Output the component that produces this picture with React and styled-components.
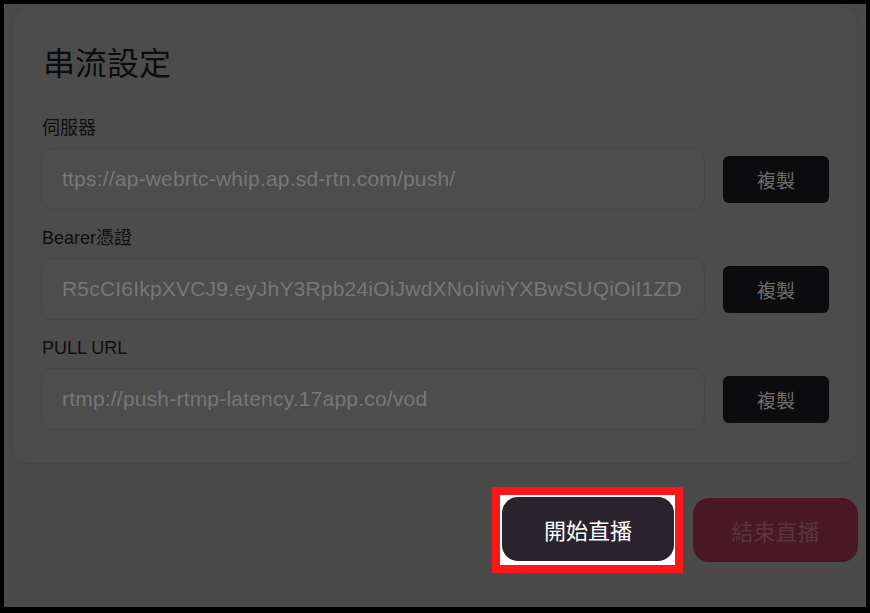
import React from "react";
import styled, { createGlobalStyle } from "styled-components";

const GlobalStyle = createGlobalStyle`
  html, body {
    margin: 0;
    padding: 0;
    background: #000;
  }
  body {
    font-family: "Liberation Sans", "Noto Sans CJK TC", sans-serif;
  }
`;

const Frame = styled.div`
  margin: 4px;
  width: 862px;
  height: 603px;
  background: #4a4a4a;
  overflow: hidden;
  display: flex;
  flex-direction: column;
  box-sizing: border-box;
  padding: 2px 8px 0 8px;
`;

const Card = styled.section`
  background: #4c4c4c;
  border: 1px solid #464646;
  border-radius: 16px;
  padding: 34px 28px 33px 28px;
  display: flex;
  flex-direction: column;
  box-sizing: border-box;
`;

const Title = styled.h2`
  margin: 0 0 34px 2px;
  font-family: "Noto Sans CJK TC", sans-serif;
  font-weight: 400;
  font-size: 32px;
  line-height: 40px;
  color: #0d0d0d;
`;

const Label = styled.div`
  font-size: 18px;
  line-height: 26px;
  color: #0f0f0f;
  margin: ${({ $first }) => ($first ? "0" : "15px")} 0 7px 1px;
`;

const Row = styled.div`
  display: flex;
  align-items: center;
  gap: 18px;
`;

const Field = styled.div`
  flex: 1;
  height: 62px;
  box-sizing: border-box;
  border: 1px solid #464646;
  background: #4d4d4d;
  border-radius: 12px;
  padding: 0 20px;
  display: flex;
  align-items: center;
  font-size: 21px;
  letter-spacing: 0.2px;
  color: #777777;
  white-space: nowrap;
  overflow: hidden;
`;

const CopyButton = styled.button`
  width: 106px;
  height: 47px;
  border: none;
  border-radius: 6px;
  background: #0c0c0e;
  color: #6c6c6c;
  font-family: "Noto Sans CJK TC", sans-serif;
  font-size: 19px;
  cursor: pointer;
`;

const Footer = styled.div`
  display: flex;
  justify-content: flex-end;
  align-items: center;
  gap: 10px;
  margin-top: 23px;
`;

const Spotlight = styled.div`
  border: 8px solid #ff1616;
  background: #ffffff;
  padding: 2px 1px 4px 2px;
  display: flex;
`;

const ActionButton = styled.button`
  width: ${({ $w }) => $w}px;
  height: 64px;
  border: none;
  border-radius: 16px;
  background: ${({ $variant }) => ($variant === "end" ? "#4a1724" : "#29232e")};
  color: ${({ $variant }) => ($variant === "end" ? "#5a3540" : "#ffffff")};
  font-family: "Noto Sans CJK TC", sans-serif;
  font-size: 22px;
  cursor: pointer;
`;

const fields = [
  { label: "伺服器", value: "ttps://ap-webrtc-whip.ap.sd-rtn.com/push/" },
  { label: "Bearer憑證", value: "R5cCI6IkpXVCJ9.eyJhY3Rpb24iOiJwdXNoIiwiYXBwSUQiOiI1ZD" },
  { label: "PULL URL", value: "rtmp://push-rtmp-latency.17app.co/vod" },
];

const App = () => {
  return (
    <>
      <GlobalStyle />
      <Frame>
        <Card>
          <Title>串流設定</Title>
          {fields.map((f, i) => (
            <React.Fragment key={f.label}>
              <Label $first={i === 0}>{f.label}</Label>
              <Row>
                <Field>{f.value}</Field>
                <CopyButton>複製</CopyButton>
              </Row>
            </React.Fragment>
          ))}
        </Card>
        <Footer>
          <Spotlight>
            <ActionButton $w={172}>開始直播</ActionButton>
          </Spotlight>
          <ActionButton $w={165} $variant="end">結束直播</ActionButton>
        </Footer>
      </Frame>
    </>
  );
};

export default App;
